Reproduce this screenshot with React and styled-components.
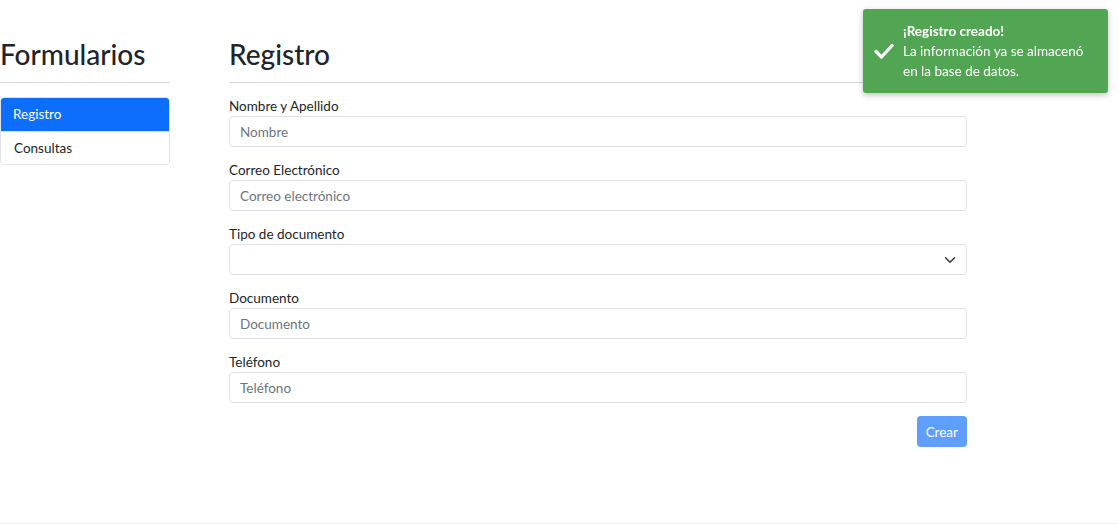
import React from "react";
import styled, { createGlobalStyle } from "styled-components";

const Global = createGlobalStyle`
  html, body { margin: 0; padding: 0; background: #fff; }
  body { font-family: Lato, "Noto Sans", sans-serif; color: #212529; }
  * { box-sizing: border-box; }
`;

const Page = styled.div`
  height: 524px;
  display: flex;
  flex-direction: column;
`;

const Content = styled.div`
  flex: 1;
  display: flex;
  gap: 59px;
  padding-top: 35px;
`;

const Footer = styled.div`
  height: 1px;
  background: #efefef;
`;

const Sidebar = styled.aside`
  width: 170px;
  flex: none;
`;

const Main = styled.main`
  width: 738px;
  flex: none;
`;

const Title = styled.h2`
  margin: 0;
  font-size: 28px;
  line-height: 38px;
  font-weight: 500;
  color: #212529;
`;

const Rule = styled.hr`
  margin: 9px 0 ${(p) => p.$after}px;
  border: 0;
  border-top: 1px solid #d9d9d9;
`;

const List = styled.div`
  display: flex;
  flex-direction: column;
  border: 1px solid #dfe2e6;
  border-radius: 4px;
  overflow: hidden;
`;

const ListItem = styled.div`
  height: ${(p) => (p.$first ? "34px" : "33px")};
  display: flex;
  align-items: center;
  padding: 0 13px;
  font-size: 13.5px;
  background: ${(p) => (p.$active ? "#0d6efd" : "#fff")};
  color: ${(p) => (p.$active ? "#fff" : "#212529")};
  border-top: ${(p) => (p.$first ? "none" : "1px solid #dfe2e6")};
  margin: ${(p) => (p.$active ? "-1px -1px 0" : "0")};
`;

const Form = styled.form`
  display: flex;
  flex-direction: column;
`;

const Group = styled.div`
  display: flex;
  flex-direction: column;
  margin-bottom: 12px;
`;

const Label = styled.label`
  font-size: 13.5px;
  line-height: 19px;
  padding-top: 2px;
  color: #212529;
`;

const Input = styled.input`
  height: 31px;
  width: 100%;
  border: 1px solid #dee2e6;
  border-radius: 4px;
  padding: 0 10px;
  font-family: inherit;
  font-size: 13.5px;
  color: #212529;
  &::placeholder { color: #6c757d; }
`;

const SelectBox = styled.div`
  position: relative;
  height: 31px;
  border: 1px solid #dee2e6;
  border-radius: 4px;
`;

const Chevron = styled.svg`
  position: absolute;
  right: 10px;
  top: 9px;
`;

const Actions = styled.div`
  display: flex;
  justify-content: flex-end;
  padding-top: 1px;
`;

const Button = styled.button`
  height: 31px;
  padding: 0 9px;
  border: 0;
  border-radius: 4px;
  background: #5d9efe;
  color: #fff;
  font-family: inherit;
  font-size: 13.5px;
`;

const Toast = styled.div`
  position: fixed;
  top: 9px;
  left: 863px;
  width: 245px;
  height: 84px;
  background: #52a553;
  border-radius: 3px;
  box-shadow: 0 2px 6px rgba(0, 0, 0, 0.25);
  display: flex;
  align-items: center;
  gap: 9px;
  padding: 0 10px 0 11px;
  color: #fff;
`;

const ToastText = styled.div`
  font-size: 13.5px;
  line-height: 20px;
`;

const ToastTitle = styled.div`
  font-weight: 700;
`;

export default function App() {
  const fields = [
    ["Nombre y Apellido", "Nombre"],
    ["Correo Electrónico", "Correo electrónico"],
  ];
  const fields2 = [
    ["Documento", "Documento"],
    ["Teléfono", "Teléfono"],
  ];
  return (
    <Page>
      <Global />
      <Content>
        <Sidebar>
          <Title>Formularios</Title>
          <Rule $after={14} />
          <List>
            <ListItem $active $first>Registro</ListItem>
            <ListItem>Consultas</ListItem>
          </List>
        </Sidebar>
        <Main>
          <Title>Registro</Title>
          <Rule $after={12} />
          <Form onSubmit={(e) => e.preventDefault()}>
            {fields.map(([l, p]) => (
              <Group key={l}>
                <Label>{l}</Label>
                <Input placeholder={p} />
              </Group>
            ))}
            <Group>
              <Label>Tipo de documento</Label>
              <SelectBox>
                <Chevron width="12" height="12" viewBox="0 0 16 16">
                  <path d="M2 5l6 6 6-6" fill="none" stroke="#343a40" strokeWidth="2" strokeLinecap="round" strokeLinejoin="round" />
                </Chevron>
              </SelectBox>
            </Group>
            {fields2.map(([l, p]) => (
              <Group key={l}>
                <Label>{l}</Label>
                <Input placeholder={p} />
              </Group>
            ))}
            <Actions>
              <Button type="button">Crear</Button>
            </Actions>
          </Form>
        </Main>
      </Content>
      <Footer />
      <Toast>
        <svg width="20" height="16" viewBox="0 0 20 16">
          <path d="M2 8.5l5.5 5.5L18 2.5" fill="none" stroke="#fff" strokeWidth="3.2" strokeLinecap="round" strokeLinejoin="round" />
        </svg>
        <ToastText>
          <ToastTitle>¡Registro creado!</ToastTitle>
          <div>La información ya se almacenó</div>
          <div>en la base de datos.</div>
        </ToastText>
      </Toast>
    </Page>
  );
}
